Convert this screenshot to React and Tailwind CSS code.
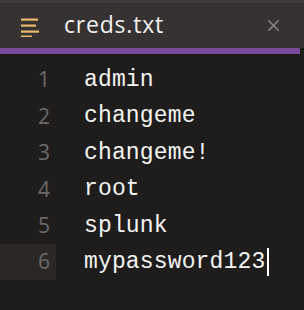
import { X } from 'lucide-react';

const lines = ['admin', 'changeme', 'changeme!', 'root', 'splunk', 'mypassword123'];

const FileIcon = () => (
  <svg width="20" height="20" viewBox="0 0 20 20" className="shrink-0">
    <g fill="#e9b96e">
      <rect x="1" y="1.5" width="17" height="2.2" />
      <rect x="1" y="7.5" width="15" height="2.2" />
      <rect x="1" y="13.5" width="18" height="2.2" />
      <rect x="1" y="18.5" width="11" height="2.2" />
    </g>
  </svg>
);

export default function App() {
  return (
    <div className="w-[304px] h-[310px] bg-[#1e1d1c] flex flex-col overflow-hidden">
      {/* tab bar */}
      <div className="h-[3px] bg-[#403b3a]" />
      <div className="h-[45px] bg-[#363231] flex items-center pl-[20px] pr-[21px]">
        <div className="mt-[2px]">
          <FileIcon />
        </div>
        <span className="ml-[24px] text-[23px] tracking-[0.8px] text-[#f2f0ef] font-['Open_Sans',sans-serif] leading-none -mt-[2px]">
          creds.txt
        </span>
        <X className="ml-auto text-[#8a8584]" size={19} strokeWidth={2} />
      </div>
      <div className="h-[6px] w-[300px] bg-[#7b4a9a]" />

      {/* editor */}
      <div className="pt-[8px] flex flex-col">
        {lines.map((line, i) => {
          const active = i === lines.length - 1;
          return (
            <div key={i} className="flex h-[36.4px] items-center">
              <div
                className={`w-[56px] h-full flex items-center justify-end pr-[6px] text-[21px] text-[#6c6a69] font-['Open_Sans',sans-serif] ${
                  active ? 'bg-[#2a2725]' : ''
                }`}
              >
                {i + 1}
              </div>
              <div className="pl-[28px] flex items-center text-[23px] tracking-[0.15px] text-[#f4f4f2] font-['Liberation_Mono',monospace]">
                {line}
                {active && <span className="ml-[2px] inline-block w-[2px] h-[28px] bg-white" />}
              </div>
            </div>
          );
        })}
      </div>
    </div>
  );
}
